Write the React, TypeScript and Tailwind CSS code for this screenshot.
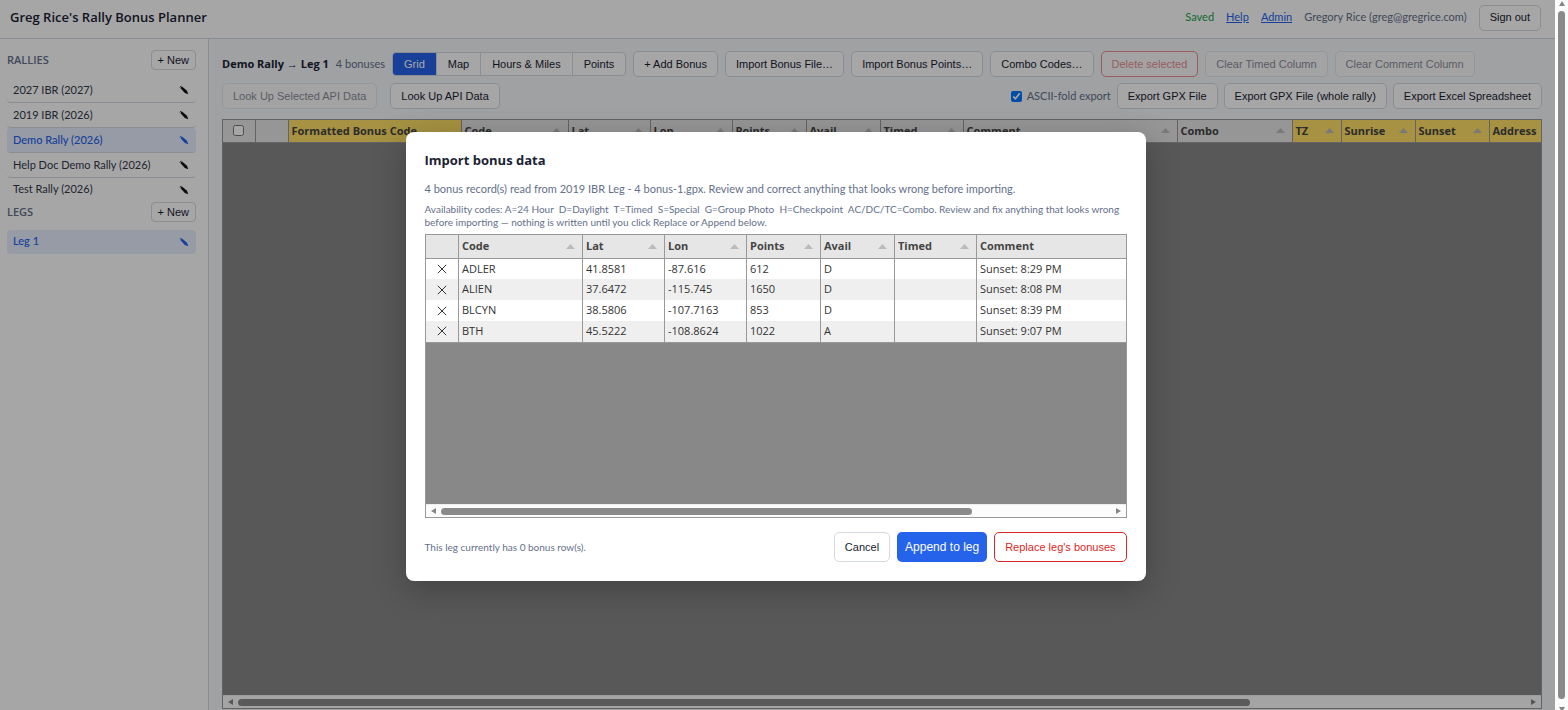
import type { ReactNode } from 'react';

type Column = { label: string; width: string; computed?: boolean; sortable?: boolean };
type Bonus = { code: string; lat: string; lon: string; points: string; avail: string; timed: string; comment: string };

const rallies = ['2027 IBR (2027)', '2019 IBR (2026)', 'Demo Rally (2026)', 'Help Doc Demo Rally (2026)', 'Test Rally (2026)'];

const gridColumns: Column[] = [
  { label: 'Formatted Bonus Code', width: 'w-[173px]', computed: true },
  { label: 'Code', width: 'w-[107px]', sortable: true },
  { label: 'Lat', width: 'w-[82px]', sortable: true },
  { label: 'Lon', width: 'w-[82px]', sortable: true },
  { label: 'Points', width: 'w-[74px]', sortable: true },
  { label: 'Avail', width: 'w-[74px]', sortable: true },
  { label: 'Timed', width: 'w-[83px]', sortable: true },
  { label: 'Comment', width: 'w-[214px]', sortable: true },
  { label: 'Combo', width: 'w-[115px]', sortable: true },
  { label: 'TZ', width: 'w-[49px]', computed: true, sortable: true },
  { label: 'Sunrise', width: 'w-[74px]', computed: true, sortable: true },
  { label: 'Sunset', width: 'w-[74px]', computed: true, sortable: true },
  { label: 'Address', width: 'w-auto', computed: true },
];

const importColumns: Column[] = [
  { label: 'Code', width: 'w-[124px]', sortable: true },
  { label: 'Lat', width: 'w-[82px]', sortable: true },
  { label: 'Lon', width: 'w-[82px]', sortable: true },
  { label: 'Points', width: 'w-[74px]', sortable: true },
  { label: 'Avail', width: 'w-[74px]', sortable: true },
  { label: 'Timed', width: 'w-[82px]', sortable: true },
  { label: 'Comment', width: 'w-auto' },
];

const bonuses: Bonus[] = [
  { code: 'ADLER', lat: '41.8581', lon: '-87.616', points: '612', avail: 'D', timed: '', comment: 'Sunset: 8:29 PM' },
  { code: 'ALIEN', lat: '37.6472', lon: '-115.745', points: '1650', avail: 'D', timed: '', comment: 'Sunset: 8:08 PM' },
  { code: 'BLCYN', lat: '38.5806', lon: '-107.7163', points: '853', avail: 'D', timed: '', comment: 'Sunset: 8:39 PM' },
  { code: 'BTH', lat: '45.5222', lon: '-108.8624', points: '1022', avail: 'A', timed: '', comment: 'Sunset: 9:07 PM' },
];

const buttonFont = "font-['Liberation_Sans',Arial,sans-serif]";
const bodyFont = "font-['Lato','Noto_Sans',sans-serif]";

function Button({ children, disabled, danger, size = 'h-[26px]' }: { children: ReactNode; disabled?: boolean; danger?: boolean; size?: string }) {
  const tone = danger ? 'border-[#dc2626] text-[#dc2626]' : 'border-[#d5d9e0] text-[#1a2233]';
  return (
    <button
      type="button"
      disabled={disabled}
      className={`${buttonFont} ${size} ${tone} shrink-0 whitespace-nowrap rounded-[5px] border bg-white px-2.5 text-[11px] disabled:opacity-50`}
    >
      {children}
    </button>
  );
}

function Pencil() {
  return (
    <svg viewBox="0 0 10 10" className="size-[10px]" fill="currentColor" aria-hidden="true">
      <path d="M1.4 3 3 1.4 8 5.8 9.3 9.3 5.8 8 Z" />
      <path d="M.9 2.4 2.4.9" stroke="currentColor" strokeWidth="1" />
    </svg>
  );
}

function SidebarHeading({ title }: { title: string }) {
  return (
    <div className="flex h-5 items-center justify-between">
      <h2 className="text-[11px] font-semibold text-[#64708a]">{title}</h2>
      <button type="button" className={`${buttonFont} h-5 rounded-[4px] border border-[#d5d9e0] bg-white px-1.5 text-[11px] leading-none text-[#1a2233]`}>
        + New
      </button>
    </div>
  );
}

function SidebarItem({ name, active }: { name: string; active?: boolean }) {
  return (
    <li
      className={`flex h-[25px] items-center justify-between rounded-[4px] border-b border-[#d5d9e0] pl-1.5 pr-[7px] last:h-6 last:border-transparent ${
        active ? 'bg-[#e6eefe] text-[#2563eb]' : 'text-[#333a48]'
      }`}
    >
      <a href="#" className={`${bodyFont} text-[11px] ${active ? 'font-medium' : ''}`}>{name}</a>
      <button type="button" aria-label={`Rename ${name}`} className={active ? 'text-[#2563eb]' : 'text-[#111]'}>
        <Pencil />
      </button>
    </li>
  );
}

function HeaderCell({ column }: { column: Column }) {
  return (
    <th scope="col" className={`${column.width} border-r border-[#999] px-[3px] font-bold last:border-r-0 ${column.computed ? 'bg-[#ffe066]' : ''}`}>
      <div className="flex items-center justify-between pr-1">
        <span className="whitespace-nowrap">{column.label}</span>
        {column.sortable && (
          <svg viewBox="0 0 9 5" className="h-[5px] w-[9px] shrink-0" fill="#bbb" aria-hidden="true">
            <path d="M0 5 4.5 0 9 5Z" />
          </svg>
        )}
      </div>
    </th>
  );
}

function HorizontalScrollbar({ thumb }: { thumb: string }) {
  return (
    <div className="flex h-[13px] items-center gap-[5px] border-t border-[#eee] bg-[#fcfcfc] px-[5px]" aria-hidden="true">
      <svg viewBox="0 0 5 6" className="h-[6px] w-[5px]" fill="#858585"><path d="M5 0V6L0 3Z" /></svg>
      <div className="flex-1">
        <div className={`${thumb} h-[7px] rounded-full bg-[#8a8a8a]`} />
      </div>
      <svg viewBox="0 0 5 6" className="h-[6px] w-[5px]" fill="#858585"><path d="M0 0V6L5 3Z" /></svg>
    </div>
  );
}

function ImportDialog() {
  return (
    <section role="dialog" aria-modal="true" aria-labelledby="import-title" className="w-[740px] rounded-[8px] bg-white px-[19px] pb-[19px] pt-[18px] shadow-[0_8px_32px_rgba(0,0,0,0.25)]">
      <h2 id="import-title" className="text-[13px] font-bold leading-5 text-[#1a2233]">Import bonus data</h2>
      <p className={`${bodyFont} mt-[10px] text-[11px] leading-[18px] text-[#64708a]`}>
        4 bonus record(s) read from 2019 IBR Leg - 4 bonus-1.gpx. Review and correct anything that looks wrong before importing.
      </p>
      <p className={`${bodyFont} mt-[5px] text-[10px] leading-[13px] text-[#64708a]`}>
        Availability codes: A=24 Hour &nbsp;D=Daylight &nbsp;T=Timed &nbsp;S=Special &nbsp;G=Group Photo &nbsp;H=Checkpoint &nbsp;AC/DC/TC=Combo. Review and fix anything that looks wrong before importing — nothing is written until you click Replace or Append below.
      </p>
      <div className="mt-[5px] flex h-[284px] flex-col border border-[#999] bg-[#888]">
        <table className="w-full table-fixed border-collapse text-left text-[11px]">
          <thead>
            <tr className="h-[23px] border-b border-[#999] bg-[#e6e6e6] text-[#444]">
              <th className="w-[33px] border-r border-[#999]" aria-label="Remove" />
              {importColumns.map((c) => <HeaderCell key={c.label} column={c} />)}
            </tr>
          </thead>
          <tbody className="text-[#333]">
            {bonuses.map((b) => (
              <tr key={b.code} className="h-[21px] border-[#999] bg-white last:border-b even:bg-[#efefef]">
                <td className="border-r border-[#999]">
                  <button type="button" aria-label={`Remove ${b.code}`} className="flex w-full justify-center">
                    <svg viewBox="0 0 10 10" className="size-[10px]" stroke="#333" strokeWidth="1" aria-hidden="true"><path d="M.8.8 9.2 9.2M9.2.8.8 9.2" /></svg>
                  </button>
                </td>
                {[b.code, b.lat, b.lon, b.points, b.avail, b.timed, b.comment].map((v, i) => (
                  <td key={i} className="border-r border-[#999] px-[3px] last:border-r-0">{v}</td>
                ))}
              </tr>
            ))}
          </tbody>
        </table>
        <div className="flex-1" />
        <HorizontalScrollbar thumb="w-[79.4%]" />
      </div>
      <footer className="mt-[14px] flex items-center justify-end gap-[7px]">
        <p className={`${bodyFont} mr-auto text-[10px] text-[#64708a]`}>This leg currently has 0 bonus row(s).</p>
        <Button size="h-[30px]">Cancel</Button>
        <button type="button" className={`${buttonFont} h-[30px] rounded-[5px] bg-[#2563eb] px-2 text-[12px] font-medium text-white`}>Append to leg</button>
        <Button size="h-[30px]" danger>Replace leg's bonuses</Button>
      </footer>
    </section>
  );
}

export default function App() {
  return (
    <div className="relative flex h-screen overflow-hidden font-['Open_Sans','Noto_Sans',sans-serif] text-[12px] text-[#1a2233]">
      <div className="flex min-w-0 flex-1 flex-col bg-[#f5f7fa]">
        <header className="flex h-[39px] shrink-0 items-center gap-3 border-b border-[#d5d9e0] bg-white pb-[3px] pl-2.5 pr-3.5">
          <h1 className="mr-auto text-[13px] font-semibold">Greg Rice's Rally Bonus Planner</h1>
          <span className={`${bodyFont} text-[11px] text-[#16a34a]`}>Saved</span>
          <a href="#" className={`${bodyFont} text-[11px] text-[#2563eb] underline`}>Help</a>
          <a href="#" className={`${bodyFont} text-[11px] text-[#2563eb] underline`}>Admin</a>
          <span className={`${bodyFont} text-[11px] text-[#64708a]`}>Gregory Rice (greg@gregrice.com)</span>
          <Button>Sign out</Button>
        </header>
        <div className="flex min-h-0 flex-1">
          <nav className="w-[209px] shrink-0 border-r border-[#d5d9e0] bg-white pl-[7px] pr-3 pt-[11px]">
            <SidebarHeading title="RALLIES" />
            <ul className="mt-2">
              {rallies.map((r) => <SidebarItem key={r} name={r} active={r === 'Demo Rally (2026)'} />)}
            </ul>
            <SidebarHeading title="LEGS" />
            <ul className="mt-2">
              <SidebarItem name="Leg 1" active />
            </ul>
          </nav>
          <main className="flex min-w-0 flex-1 flex-col px-[13px] pt-3">
            <div className="flex items-center gap-[7px]">
              <h2 className="whitespace-nowrap text-[11px] font-bold">Demo Rally → Leg 1</h2>
              <span className={`${bodyFont} whitespace-nowrap text-[11px] text-[#64708a]`}>4 bonuses</span>
              <div className={`${buttonFont} flex h-6 shrink-0 divide-x divide-[#d5d9e0] overflow-hidden rounded-[4px] border border-[#d5d9e0] bg-white text-[11px]`}>
                <button type="button" className="bg-[#2563eb] px-[11px] text-white">Grid</button>
                <button type="button" className="px-[11px]">Map</button>
                <button type="button" className="px-[11px]">Hours &amp; Miles</button>
                <button type="button" className="px-[11px]">Points</button>
              </div>
              <Button>+ Add Bonus</Button>
              <Button>Import Bonus File…</Button>
              <Button>Import Bonus Points…</Button>
              <Button>Combo Codes…</Button>
              <Button danger disabled>Delete selected</Button>
              <Button disabled>Clear Timed Column</Button>
              <Button disabled>Clear Comment Column</Button>
            </div>
            <div className="mt-1.5 flex items-center gap-1.5">
              <Button disabled>Look Up Selected API Data</Button>
              <span className="ml-[7px] flex"><Button>Look Up API Data</Button></span>
              <label className={`${bodyFont} ml-auto flex items-center gap-[5px] text-[11px] text-[#64708a]`}>
                <input type="checkbox" defaultChecked className="size-[11px] accent-[#0075ff]" />
                ASCII-fold export
              </label>
              <Button>Export GPX File</Button>
              <Button>Export GPX File (whole rally)</Button>
              <Button>Export Excel Spreadsheet</Button>
            </div>
            <div className="mb-px mt-[10px] flex min-h-0 flex-1 flex-col border border-[#999] bg-[#888]">
              <table className="w-full table-fixed border-collapse text-left text-[11px]">
                <thead>
                  <tr className="h-[22px] border-b border-[#999] bg-[#e6e6e6] text-[#444]">
                    <th className="w-[32px] border-r border-[#999]">
                      <input type="checkbox" aria-label="Select all bonuses" className="mx-auto block size-[11px]" />
                    </th>
                    <th className="w-[33px] border-r border-[#999]" />
                    {gridColumns.map((c) => <HeaderCell key={c.label} column={c} />)}
                  </tr>
                </thead>
              </table>
              <div className="flex-1" />
              <HorizontalScrollbar thumb="w-[78.6%]" />
            </div>
          </main>
        </div>
      </div>
      <div className="flex w-[13px] shrink-0 flex-col items-center gap-[5px] bg-[#fcfcfc] pt-px" aria-hidden="true">
        <svg viewBox="0 0 6 5" className="h-[5px] w-[6px] shrink-0" fill="#858585"><path d="M0 5H6L3 0Z" /></svg>
        <div className="w-[7px] flex-1 rounded-full bg-[#8a8a8a]" />
        <svg viewBox="0 0 6 3" className="mt-[3px] h-[3px] w-[6px] shrink-0" fill="#858585"><path d="M0 0H6L3 5Z" /></svg>
      </div>
      <div className="absolute inset-y-0 left-0 right-[13px] flex items-start justify-center bg-black/35 pr-1 pt-[132px]">
        <ImportDialog />
      </div>
    </div>
  );
}
